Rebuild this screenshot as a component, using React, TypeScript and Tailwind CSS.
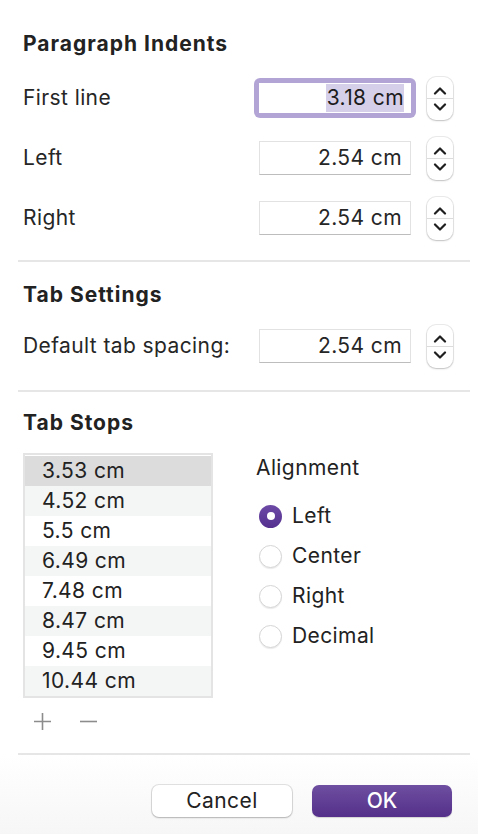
import React from "react";

const font = { fontFamily: "Inter, 'Noto Sans', sans-serif" };

function Chevron({ up }: { up?: boolean }) {
  return (
    <svg width="14" height="9" viewBox="0 0 14 9" fill="none">
      <path
        d={up ? "M2 7.5 L7 2.5 L12 7.5" : "M2 1.5 L7 6.5 L12 1.5"}
        stroke="#1f1f1f"
        strokeWidth="2.2"
        strokeLinecap="round"
        strokeLinejoin="round"
      />
    </svg>
  );
}

function Stepper() {
  return (
    <div className="flex h-[43px] w-[26px] flex-col items-center rounded-[9px] bg-white shadow-[0_0_0_1px_rgba(0,0,0,0.08),0_1px_2px_rgba(0,0,0,0.18)]">
      <div className="flex h-[21px] items-end pb-[3px]"><Chevron up /></div>
      <div className="h-px w-full bg-[#dcdcdc]" />
      <div className="flex h-[21px] items-start pt-[4px]"><Chevron /></div>
    </div>
  );
}

function Field({ value, focused }: { value: string; focused?: boolean }) {
  if (focused) {
    return (
      <div className="-mx-[5px] rounded-[6px] bg-[#b3a4d6] p-[5px]">
        <div className="flex h-[30px] w-[152px] items-center justify-end bg-white pr-[7px] text-[21px] tracking-[0.4px] text-[#1c1c1c]">
          <span className="bg-[#d6cfe9] pl-[1px] leading-[28px]">{value}</span>
        </div>
      </div>
    );
  }
  return (
    <div className="flex h-[34px] w-[152px] items-center justify-end border border-[#e2e2e2] border-b-[#bdbdbd] bg-white pr-[8px] text-[21px] tracking-[0.4px] text-[#262626]">
      {value}
    </div>
  );
}

function Row({ label, value, focused }: { label: string; value: string; focused?: boolean }) {
  return (
    <div className="flex h-[60px] items-center">
      <div className="flex-1 text-[21px] tracking-[0.4px] text-[#262626]">{label}</div>
      <Field value={value} focused={focused} />
      <div className="ml-[16px]"><Stepper /></div>
    </div>
  );
}

function Divider() {
  return <div className="h-[2px] bg-[#e6e6e6]" />;
}

function Radio({ label, checked }: { label: string; checked?: boolean }) {
  return (
    <div className="flex h-[40px] items-center">
      {checked ? (
        <div className="ml-[3px] flex h-[23px] w-[23px] items-center justify-center rounded-full bg-gradient-to-b from-[#6d4aa6] to-[#55308f]">
          <div className="h-[8px] w-[8px] rounded-full bg-white" />
        </div>
      ) : (
        <div className="ml-[3px] h-[23px] w-[23px] rounded-full border border-[#d6d6d6] bg-white shadow-[0_1px_1px_rgba(0,0,0,0.08)]" />
      )}
      <span className="ml-[10px] text-[21px] tracking-[0.4px] text-[#222]">{label}</span>
    </div>
  );
}

const stops = ["3.53 cm", "4.52 cm", "5.5 cm", "6.49 cm", "7.48 cm", "8.47 cm", "9.45 cm", "10.44 cm"];

export default function App() {
  return (
    <div className="h-[834px] w-[478px] overflow-hidden bg-white pl-[18px] pr-[8px]" style={font}>
      <div className="pl-[5px] pr-[17px]">
        <div className="pt-[31px] text-[21px] font-bold leading-[26px] tracking-[1px] text-[#222]">Paragraph Indents</div>
        <div className="mt-[11px]">
          <Row label="First line" value="3.18 cm" focused />
          <Row label="Left" value="2.54 cm" />
          <Row label="Right" value="2.54 cm" />
        </div>
      </div>
      <div className="mt-[12px]"><Divider /></div>
      <div className="pl-[5px] pr-[17px]">
        <div className="pt-[20px] text-[21px] font-bold leading-[26px] tracking-[1px] text-[#222]">Tab Settings</div>
        <div className="mt-[8px]">
          <Row label="Default tab spacing:" value="2.54 cm" />
        </div>
      </div>
      <div className="mt-[14px]"><Divider /></div>
      <div className="pl-[5px] pr-[17px]">
        <div className="pt-[18px] text-[21px] font-bold leading-[26px] tracking-[1px] text-[#222]">Tab Stops</div>
        <div className="mt-[17px] flex">
          <div>
            <div className="w-[190px] border-2 border-[#e4e4e4] pt-[1px]">
              {stops.map((s, i) => (
                <div
                  key={s}
                  className={
                    "flex h-[30px] items-center pl-[17px] text-[21px] tracking-[0.4px] text-[#222] " +
                    (i === 0 ? "bg-[#dcdcdc]" : i % 2 === 1 ? "bg-[#f4f5f5]" : "bg-white")
                  }
                >
                  {s}
                </div>
              ))}
            </div>
            <div className="mt-[14px] flex items-center gap-[27px] pl-[10px]">
              <svg width="19" height="19" viewBox="0 0 19 19">
                <path d="M9.5 1 V18 M1 9.5 H18" stroke="#8c8c8c" strokeWidth="1.6" />
              </svg>
              <svg width="19" height="19" viewBox="0 0 19 19">
                <path d="M1 9.5 H18" stroke="#8c8c8c" strokeWidth="1.6" />
              </svg>
            </div>
          </div>
          <div className="ml-[43px]">
            <div className="pt-[2px] text-[21px] leading-[26px] tracking-[0.4px] text-[#222]">Alignment</div>
            <div className="mt-[15px]">
              <Radio label="Left" checked />
              <Radio label="Center" />
              <Radio label="Right" />
              <Radio label="Decimal" />
            </div>
          </div>
        </div>
      </div>
      <div className="mt-[22px]"><Divider /></div>
      <div className="-ml-[18px] -mr-[8px] flex h-[200px] justify-end gap-[20px] bg-gradient-to-b from-white to-[#e9e9e9] pr-[26px] pt-[30px]">
        <button className="h-[32px] w-[140px] rounded-[7px] bg-white text-[21px] tracking-[0.4px] text-[#222] shadow-[0_0_0_1px_rgba(0,0,0,0.1),0_1px_2px_rgba(0,0,0,0.2)]">
          Cancel
        </button>
        <button className="h-[32px] w-[140px] rounded-[7px] bg-gradient-to-b from-[#6e4fa0] to-[#552f8a] text-[21px] font-medium text-white shadow-[0_1px_1px_rgba(0,0,0,0.15)]">
          OK
        </button>
      </div>
    </div>
  );
}
